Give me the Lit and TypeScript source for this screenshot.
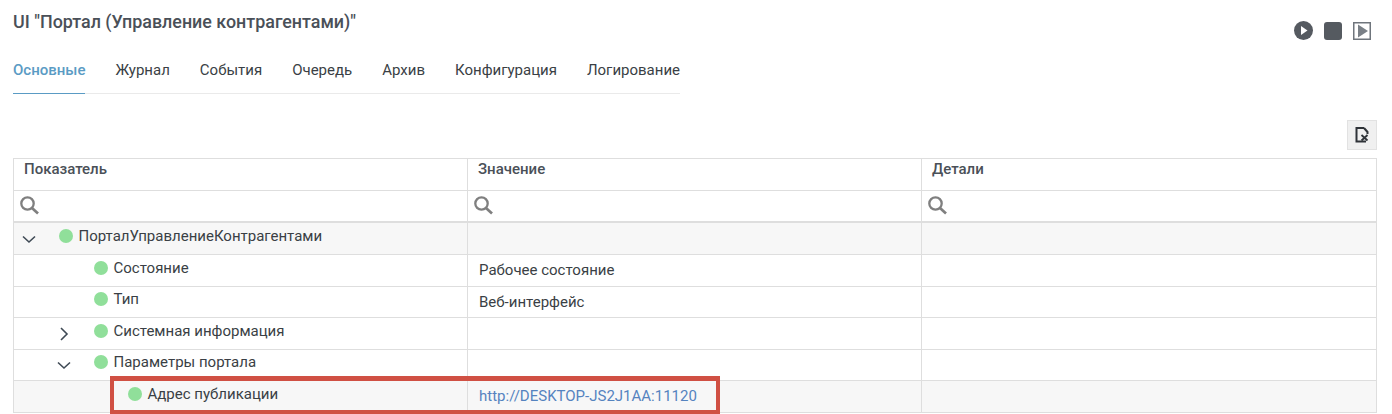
import { LitElement, html, css, svg } from "lit";
import { customElement } from "lit/decorators.js";

type Row = { level: number; toggle?: "open" | "closed"; name: string; value?: string; link?: boolean; tint?: boolean; h: number };

const rows: Row[] = [
  { level: 0, toggle: "open", name: "ПорталУправлениеКонтрагентами", tint: true, h: 32 },
  { level: 1, name: "Состояние", value: "Рабочее состояние", h: 32 },
  { level: 1, name: "Тип", value: "Веб-интерфейс", h: 31 },
  { level: 1, toggle: "closed", name: "Системная информация", h: 32 },
  { level: 1, toggle: "open", name: "Параметры портала", h: 31 },
  { level: 2, name: "Адрес публикации", value: "http://DESKTOP-JS2J1AA:11120", link: true, tint: true, h: 32 },
];

const tabs = ["Основные", "Журнал", "События", "Очередь", "Архив", "Конфигурация", "Логирование"];

const searchIcon = svg`<svg width="20" height="20" viewBox="0 0 20 20" fill="none" stroke="#7f7f7f"><circle cx="7.5" cy="7.5" r="6.2" stroke-width="2.3"/><path d="M12 12 L18 17.5" stroke-width="2.7"/></svg>`;
const chevDown = svg`<svg width="16" height="16" viewBox="0 0 16 16" fill="none" stroke="#3f4a55" stroke-width="1.6"><path d="M2 5.5 L8 11 L14 5.5"/></svg>`;
const chevRight = svg`<svg width="16" height="16" viewBox="0 0 16 16" fill="none" stroke="#3f4a55" stroke-width="1.6"><path d="M5 2 L11 8 L5 14"/></svg>`;

@customElement("app-root")
export class AppRoot extends LitElement {
  static styles = css`
    :host { display: block; position: relative; width: 1392px; height: 414px; overflow: hidden; background: #fff; font-family: Roboto, "Noto Sans", sans-serif; font-size: 15px; color: #3a3f45; }
    .page { padding: 12px 15px 0 13px; }
    .top { display: flex; justify-content: space-between; align-items: flex-start; }
    h1 { margin: 0; font-size: 17.9px; line-height: 20px; font-weight: 500; color: #4a5058; }
    .actions { display: flex; align-items: center; gap: 11px; margin: 9px 0 0 0; padding-right: 6px; }
    .actions svg { display: block; }
    .tabs { display: flex; width: 667px; gap: 30px; margin-top: 11px; border-bottom: 1px solid #eaeaea; height: 43px; box-sizing: border-box; }
    .tab { line-height: 38px; height: 43px; box-sizing: border-box; color: #3a3f45; white-space: nowrap; }
    .tab.active { color: #5a9bc4; font-weight: 500; border-bottom: 1px solid #5a9bc4; }
    .tools { display: flex; justify-content: flex-end; margin-top: 26px; }
    .btn { width: 30px; height: 30px; box-sizing: border-box; background: #f0f0f0; border: 1px solid #e2e2e2; display: flex; align-items: center; justify-content: center; }
    .table { border: 1px solid #dedede; border-bottom: none; display: grid; grid-template-columns: 454px 454px 1fr; width: 1364px; box-sizing: border-box; margin-top: 8px; }
    .cell { border-right: 1px solid #dedede; border-bottom: 1px solid #dedede; box-sizing: border-box; min-width: 0; }
    .cell:nth-child(3n) { border-right: none; }
    .head { height: 32px; padding: 2px 10px 0; font-weight: 500; color: #4a5058; line-height: 17px; }
    .filter { height: 32px; border-bottom-width: 2px; padding: 5px 0 0 6px; }
    .filter svg { display: block; }
    .val { padding: 5px 11px 0; line-height: 20px; white-space: nowrap; }
    .tint { background: #f7f7f7; }
    .name { display: flex; align-items: flex-start; padding-top: 3px; line-height: 20px; white-space: nowrap; }
    .name.tight { padding-top: 2px; }
    .tog { width: 16px; height: 16px; margin-top: 5px; flex: none; }
    .tog svg { display: block; }
    .lv0 { margin-left: 7px; }
    .lv1 { margin-left: 42px; }
    .lv2 { margin-left: 76px; }
    .dot { width: 14px; height: 14px; border-radius: 50%; background: #90df9a; margin: 3px 5.5px 0 22px; flex: none; }
    a { color: #5583bf; text-decoration: none; }
    .mark { position: absolute; left: 110px; top: 376px; width: 610px; height: 38px; border: solid #d05043; border-width: 5px 4px 4px 4px; box-sizing: border-box; pointer-events: none; }
  `;

  render() {
    return html`
      <div class="page">
        <div class="top">
          <h1>UI "Портал (Управление контрагентами)"</h1>
          <div class="actions">
            <svg width="19" height="19" viewBox="0 0 19 19"><circle cx="9.5" cy="9.5" r="9.5" fill="#555a60"/><path d="M7 5 L13.5 9.5 L7 14 Z" fill="#fff"/></svg>
            <svg width="18" height="18" viewBox="0 0 18 18"><rect width="18" height="18" rx="3" fill="#555a60"/></svg>
            <svg width="18" height="18" viewBox="0 0 18 18"><rect x="0.75" y="0.75" width="16.5" height="16.5" fill="#fff" stroke="#6f757c" stroke-width="1.5"/><path d="M5 2.5 L15 9 L5 15.5 Z" fill="#7a8087"/></svg>
          </div>
        </div>
        <div class="tabs">${tabs.map((t, i) => html`<div class="tab ${i === 0 ? "active" : ""}">${t}</div>`)}</div>
        <div class="tools">
          <div class="btn"><svg width="16" height="16" viewBox="0 0 16 16" fill="none" stroke="#2f3338" stroke-width="2"><path d="M10 1 H2.5 V14.5 H12"/><path d="M10 1 L13.5 5 V7"/><path d="M7.5 8 L13.5 13.5 M13.5 8 L7.5 13.5" stroke-width="1.8"/></svg></div>
        </div>
        <div class="table">
          <div class="cell head">Показатель</div><div class="cell head">Значение</div><div class="cell head">Детали</div>
          <div class="cell filter">${searchIcon}</div><div class="cell filter">${searchIcon}</div><div class="cell filter">${searchIcon}</div>
          ${rows.map(
            (r) => html`
              <div class="cell name ${r.tint ? "tint" : ""} ${r.h === 31 ? "tight" : ""}" style="height:${r.h}px">
                <div class="tog lv${r.level}">${r.toggle === "open" ? chevDown : r.toggle === "closed" ? chevRight : ""}</div>
                <div class="dot"></div>
                <span>${r.name}</span>
              </div>
              <div class="cell val ${r.tint ? "tint" : ""}" style="height:${r.h}px">${r.link ? html`<a href="#">${r.value}</a>` : r.value ?? ""}</div>
              <div class="cell ${r.tint ? "tint" : ""}" style="height:${r.h}px"></div>
            `
          )}
        </div>
      </div>
      <div class="mark"></div>
    `;
  }
}
